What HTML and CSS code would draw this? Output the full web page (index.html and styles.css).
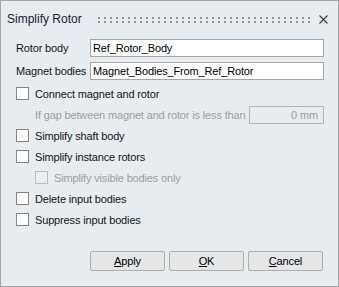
FILE: index.html
```html
<!DOCTYPE html>
<html lang="en">

<head>
  <meta charset="UTF-8">
  <meta name="viewport" content="width=device-width, initial-scale=1.0">
  <title>Simplify Rotor</title>
  <link rel="stylesheet" href="styles.css">
</head>

<body>
  <div class="dialog">
    <div class="titlebar">
      <span class="title">Simplify Rotor</span>
      <span class="grip"></span>
      <svg class="close" width="9" height="9" viewBox="0 0 9 9">
        <path d="M0.5 0.5L8.5 8.5M8.5 0.5L0.5 8.5" stroke="#3c3c3c" stroke-width="1.1" fill="none" />
      </svg>
    </div>

    <div class="fields">
      <div class="field">
        <span class="field-label">Rotor body</span>
        <span class="text-input">Ref_Rotor_Body</span>
      </div>
      <div class="field">
        <span class="field-label">Magnet bodies</span>
        <span class="text-input">Magnet_Bodies_From_Ref_Rotor</span>
      </div>
    </div>

    <div class="options">
      <div class="option"><span class="box"></span>Connect magnet and rotor</div>
      <div class="option sub disabled">
        If gap between magnet and rotor is less than
        <span class="gap-input">0 mm</span>
      </div>
      <div class="option"><span class="box"></span>Simplify shaft body</div>
      <div class="option"><span class="box"></span>Simplify instance rotors</div>
      <div class="option sub disabled"><span class="box"></span>Simplify visible bodies only</div>
      <div class="option"><span class="box"></span>Delete input bodies</div>
      <div class="option"><span class="box"></span>Suppress input bodies</div>
    </div>

    <div class="actions">
      <button class="btn"><u>A</u>pply</button>
      <button class="btn"><u>O</u>K</button>
      <button class="btn"><u>C</u>ancel</button>
    </div>
  </div>
</body>

</html>
```

FILE: styles.css
```css
* {
  padding: 0;
  margin: 0;
  box-sizing: border-box;
}

body {
  font-family: "Liberation Sans", Arial, sans-serif;
  font-size: 11px;
  letter-spacing: -0.15px;
  color: #141414;
  background-color: #e6ecf0;
}

.dialog {
  width: 339px;
  height: 287px;
  display: flex;
  flex-direction: column;
  padding: 0 14px 15px 15px;
  background-color: #e6ecf0;
  border: 1px solid #a2a5a8;
}

.titlebar {
  height: 36px;
  display: flex;
  align-items: center;
  margin: 0 -14px 0 -15px;
  padding: 0 10px 0 6px;
}

.title {
  font-size: 12px;
  letter-spacing: 0;
  color: #1b1b2e;
}

.grip {
  flex: 1;
  height: 6px;
  margin: 2px 8px 0 16px;
  background-image:
    linear-gradient(to bottom, transparent 2px, #e6ecf0 2px, #e6ecf0 4px, transparent 4px),
    linear-gradient(90deg, #8e9194 2px, transparent 2px);
  background-size: 100% 6px, 6px 6px;
}

.close {
  display: block;
}

.fields {
  display: flex;
  flex-direction: column;
  gap: 5px;
  margin-top: 2px;
}

.field {
  display: flex;
  align-items: center;
  height: 18px;
}

.field-label {
  width: 74px;
  flex-shrink: 0;
  white-space: nowrap;
}

.text-input {
  flex: 1;
  height: 18px;
  line-height: 16px;
  padding: 0 2px;
  color: #000;
  background-color: #fff;
  border: 1px solid #a6a6a6;
  white-space: nowrap;
}

.options {
  display: flex;
  flex-direction: column;
  margin-top: 3px;
}

.option {
  display: flex;
  align-items: center;
  height: 21px;
  white-space: nowrap;
}

.option.sub {
  padding-left: 19px;
}

.option.disabled {
  color: #9d9d9d;
}

.box {
  width: 13px;
  height: 13px;
  margin-right: 6px;
  flex-shrink: 0;
  background-color: #fff;
  border: 1px solid #858585;
}

.disabled .box {
  background-color: #eeeff0;
  border-color: #bcbcbc;
}

.gap-input {
  width: 75px;
  height: 18px;
  margin-left: auto;
  line-height: 16px;
  padding-right: 5px;
  text-align: right;
  color: #9d9d9d;
  border: 1px solid #b4b4b4;
}

.actions {
  display: flex;
  justify-content: flex-end;
  gap: 4px;
  margin-top: auto;
  margin-right: 1px;
}

.btn {
  width: 75px;
  height: 20px;
  font-family: inherit;
  font-size: 11px;
  letter-spacing: -0.15px;
  color: #000;
  background-color: #e4e6e8;
  border: 1px solid #adadad;
  border-radius: 2px;
}
```
